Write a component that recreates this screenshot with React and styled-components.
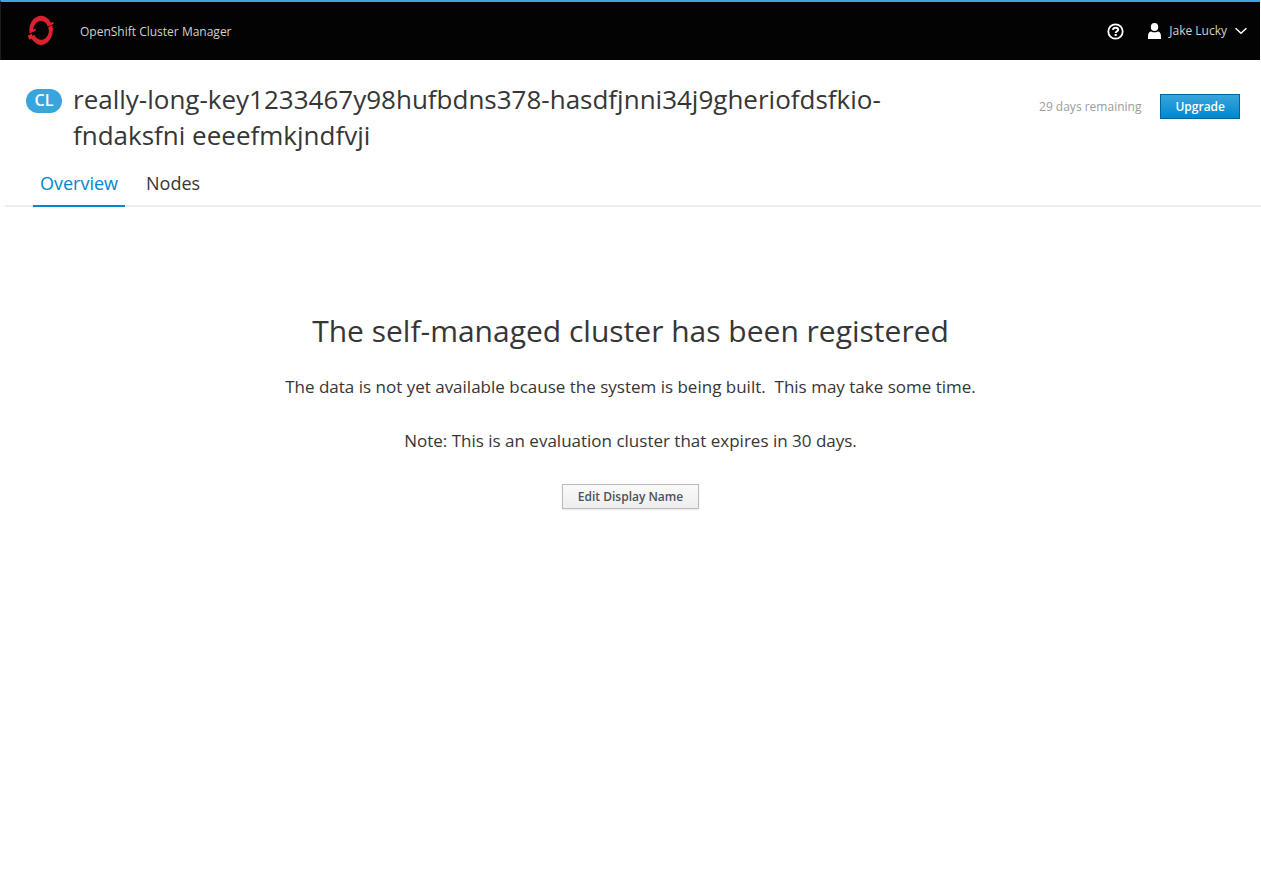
import React from "react";
import styled, { createGlobalStyle } from "styled-components";

const GlobalStyle = createGlobalStyle`
  *, *::before, *::after { box-sizing: border-box; }
  body {
    margin: 0;
    background: #fff;
    color: #363636;
    font-family: "Open Sans", "Noto Sans", sans-serif;
    font-size: 12px;
  }
  h1, h2, p { margin: 0; font-weight: 400; }
  button { font-family: inherit; cursor: pointer; }
`;

const Masthead = styled.header`
  display: flex;
  align-items: center;
  height: 60px;
  margin-right: 1px;
  padding: 0 13px 0 26px;
  border-top: 2px solid #39a5dc;
  border-left: 1px solid #1c1c1c;
  background: #030303;
`;

const Brand = styled.a`
  display: flex;
  align-items: center;
  gap: 25px;
  color: #d1d1d1;
  font-size: 12px;
  text-decoration: none;
`;

const Tools = styled.div`
  display: flex;
  align-items: center;
  gap: 24px;
  margin-left: auto;
`;

const ToolButton = styled.button`
  display: flex;
  align-items: center;
  gap: 8px;
  padding: 0;
  border: 0;
  background: none;
  color: #d1d1d1;
  font-size: 12px;
  line-height: 20px;
`;

const ClusterHeader = styled.section`
  display: flex;
  align-items: flex-start;
  justify-content: space-between;
  padding: 21px 21px 0 26px;
`;

const Identity = styled.div`
  display: flex;
  align-items: flex-start;
  gap: 11px;
`;

const Badge = styled.span`
  flex: none;
  width: 36px;
  height: 24px;
  margin-top: 8px;
  border-radius: 12px;
  background: #39a5dc;
  color: #fff;
  font-size: 16px;
  font-weight: 600;
  line-height: 23px;
  text-align: center;
`;

const ClusterName = styled.h1`
  max-width: 840px;
  font-size: 26px;
  line-height: 36px;
`;

const Plan = styled.div`
  display: flex;
  flex: none;
  align-items: center;
  gap: 19px;
  margin-top: 13px;
  color: #9c9c9c;
`;

const Button = styled.button`
  height: 25px;
  padding: 0 ${(p) => (p.$primary ? 14 : 15)}px;
  border: 1px solid ${(p) => (p.$primary ? "#00659c" : "#bbb")};
  background: ${(p) =>
    p.$primary
      ? "linear-gradient(#39a5dc, #0088ce)"
      : "linear-gradient(#fafafa, #ededed)"};
  box-shadow: ${(p) => (p.$primary ? "none" : "0 1px 2px rgba(3, 3, 3, 0.1)")};
  color: ${(p) => (p.$primary ? "#fff" : "#4d5258")};
  font-size: 12px;
  font-weight: 600;
  line-height: 20px;
`;

const Tabs = styled.nav`
  display: flex;
  gap: 14px;
  margin: 12px 0 0 5px;
  padding-left: 28px;
  box-shadow: inset 0 -2px #ededed;
`;

const Tab = styled.a`
  height: 42px;
  padding: 6px 7px 0;
  border-bottom: 2px solid ${(p) => (p.$active ? "#0088ce" : "transparent")};
  color: ${(p) => (p.$active ? "#0088ce" : "#363636")};
  font-size: 18px;
  line-height: 24px;
  text-decoration: none;
`;

const EmptyState = styled.main`
  display: flex;
  flex-direction: column;
  align-items: center;
  padding: 104px 20px 40px;
  text-align: center;
`;

const Title = styled.h2`
  font-size: 30px;
  line-height: 40px;
  margin-bottom: 24px;
`;

const Message = styled.p`
  font-size: 17px;
  line-height: 24px;
  margin-bottom: 30px;
  white-space: pre-wrap;

  &:last-of-type { margin-bottom: 31px; }
`;

const OpenShiftLogo = () => (
  <svg width="28" height="32" viewBox="0 0 28 32" fill="none" aria-hidden="true">
    <g fill="#db212f">
      <path d="M2.3 16A11.7 14.5 0 0 1 24 7.8L20.9 11A7.8 9.4 0 0 0 6.2 16z" />
      <path d="M25.7 14A11.7 14.5 0 0 1 4 22.8L7.1 19.6A7.8 9.4 0 0 0 21.8 14z" />
      <path d="m20 9.4 6.2-2.7.5 2.3-5.8 2.5zM2.2 16.6l6.2-3 .5 2-6.2 3z" />
    </g>
    <path fill="#ea2227" d="m21.2 12.2 3.7-1.9 1.5 4-4 2.1zM.7 20.7l3.9-2 1.8 3.7-3.9 2.3z" />
  </svg>
);

const HelpIcon = () => (
  <svg width="17" height="17" viewBox="0 0 17 17" fill="none" stroke="#fff" strokeWidth="2" aria-hidden="true">
    <circle cx="8.5" cy="8.5" r="7.2" strokeWidth="1.8" />
    <path d="M5.9 6.9c.2-1.5 1.2-2.1 2.7-2.1 1.6 0 2.6.8 2.6 1.9 0 1.6-2.5 1.5-2.5 3.2" />
    <path d="M8.7 11v2" />
  </svg>
);

const UserIcon = () => (
  <svg width="13" height="16" viewBox="0 0 13 16" fill="#fff" aria-hidden="true">
    <ellipse cx="6.5" cy="4" rx="3.7" ry="4" />
    <path d="M0 16v-2.5C0 10 1.4 8.4 3.2 8.4c2 1.2 4.6 1.2 6.6 0 1.8 0 3.2 1.6 3.2 5.1V16z" />
  </svg>
);

const ChevronIcon = () => (
  <svg width="12" height="8" viewBox="0 0 12 8" fill="none" stroke="#fff" strokeWidth="1.5" aria-hidden="true">
    <path d="M.6 1.2 6 6.2l5.4-5" />
  </svg>
);

export default function App() {
  return (
    <>
      <GlobalStyle />
      <Masthead>
        <Brand href="#">
          <OpenShiftLogo />
          OpenShift Cluster Manager
        </Brand>
        <Tools>
          <ToolButton type="button" aria-label="Help">
            <HelpIcon />
          </ToolButton>
          <ToolButton type="button" aria-haspopup="menu">
            <UserIcon />
            Jake Lucky
            <ChevronIcon />
          </ToolButton>
        </Tools>
      </Masthead>
      <ClusterHeader>
        <Identity>
          <Badge>CL</Badge>
          <ClusterName>
            really-long-key1233467y98hufbdns378-hasdfjnni34j9gheriofdsfkio-fndaksfni eeeefmkjndfvji
          </ClusterName>
        </Identity>
        <Plan>
          29 days remaining
          <Button type="button" $primary>Upgrade</Button>
        </Plan>
      </ClusterHeader>
      <Tabs aria-label="Cluster">
        <Tab href="#overview" aria-current="page" $active>Overview</Tab>
        <Tab href="#nodes">Nodes</Tab>
      </Tabs>
      <EmptyState>
        <Title>The self-managed cluster has been registered</Title>
        <Message>{"The data is not yet available bcause the system is being built.  This may take some time."}</Message>
        <Message>Note: This is an evaluation cluster that expires in 30 days.</Message>
        <Button type="button">Edit Display Name</Button>
      </EmptyState>
    </>
  );
}
